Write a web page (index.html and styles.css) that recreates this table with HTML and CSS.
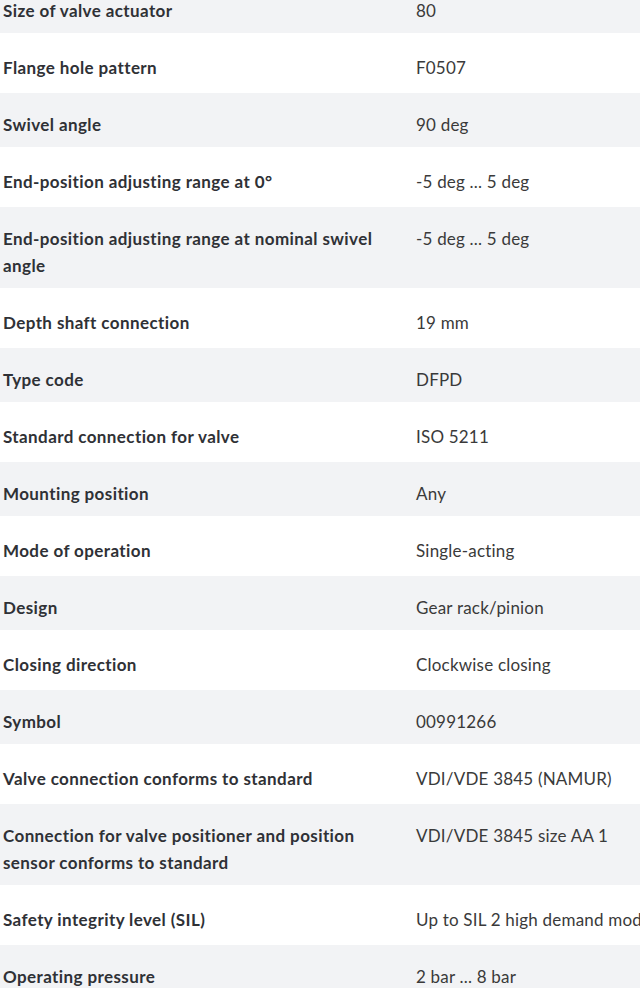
FILE: index.html
```html
<!DOCTYPE html>
<html lang="en">
<head>
<meta charset="utf-8">
<title>Technical data</title>
<link rel="stylesheet" href="styles.css">
</head>
<body>
<div class="specs">
  <div class="row shade"><div class="label">Size of valve actuator</div><div class="value">80</div></div>
  <div class="row"><div class="label">Flange hole pattern</div><div class="value">F0507</div></div>
  <div class="row shade"><div class="label">Swivel angle</div><div class="value">90 deg</div></div>
  <div class="row"><div class="label">End-position adjusting range at 0°</div><div class="value">-5 deg ... 5 deg</div></div>
  <div class="row shade"><div class="label">End-position adjusting range at nominal swivel angle</div><div class="value">-5 deg ... 5 deg</div></div>
  <div class="row"><div class="label">Depth shaft connection</div><div class="value">19 mm</div></div>
  <div class="row shade"><div class="label">Type code</div><div class="value">DFPD</div></div>
  <div class="row"><div class="label">Standard connection for valve</div><div class="value">ISO 5211</div></div>
  <div class="row shade"><div class="label">Mounting position</div><div class="value">Any</div></div>
  <div class="row"><div class="label">Mode of operation</div><div class="value">Single-acting</div></div>
  <div class="row shade"><div class="label">Design</div><div class="value">Gear rack/pinion</div></div>
  <div class="row"><div class="label">Closing direction</div><div class="value">Clockwise closing</div></div>
  <div class="row shade"><div class="label">Symbol</div><div class="value">00991266</div></div>
  <div class="row"><div class="label">Valve connection conforms to standard</div><div class="value">VDI/VDE 3845 (NAMUR)</div></div>
  <div class="row shade"><div class="label">Connection for valve positioner and position sensor conforms to standard</div><div class="value">VDI/VDE 3845 size AA 1</div></div>
  <div class="row"><div class="label">Safety integrity level (SIL)</div><div class="value">Up to SIL 2 high demand mode</div></div>
  <div class="row shade"><div class="label">Operating pressure</div><div class="value">2 bar ... 8 bar</div></div>
</div>
</body>
</html>
```
FILE: styles.css
```css
html, body {
  margin: 0;
  padding: 0;
  background: #ffffff;
  overflow: hidden;
}
body {
  font-family: Lato, "Noto Sans", sans-serif;
  font-size: 17px;
  line-height: 27px;
  color: #333333;
}
.specs {
  margin-top: -21px;
  width: 760px;
}
.row {
  display: grid;
  grid-template-columns: 413px 1fr;
  padding: 21px 0 12px 3px;
  background: #ffffff;
}
.row.shade {
  background: #f2f3f5;
  padding-top: 18px;
  padding-bottom: 9px;
}
.label {
  font-weight: 700;
  letter-spacing: 0.4px;
  padding-right: 18px;
  color: #2f3136;
}
.value {
  font-weight: 400;
  letter-spacing: 0.2px;
  white-space: nowrap;
  color: #3a3a3a;
}
```
